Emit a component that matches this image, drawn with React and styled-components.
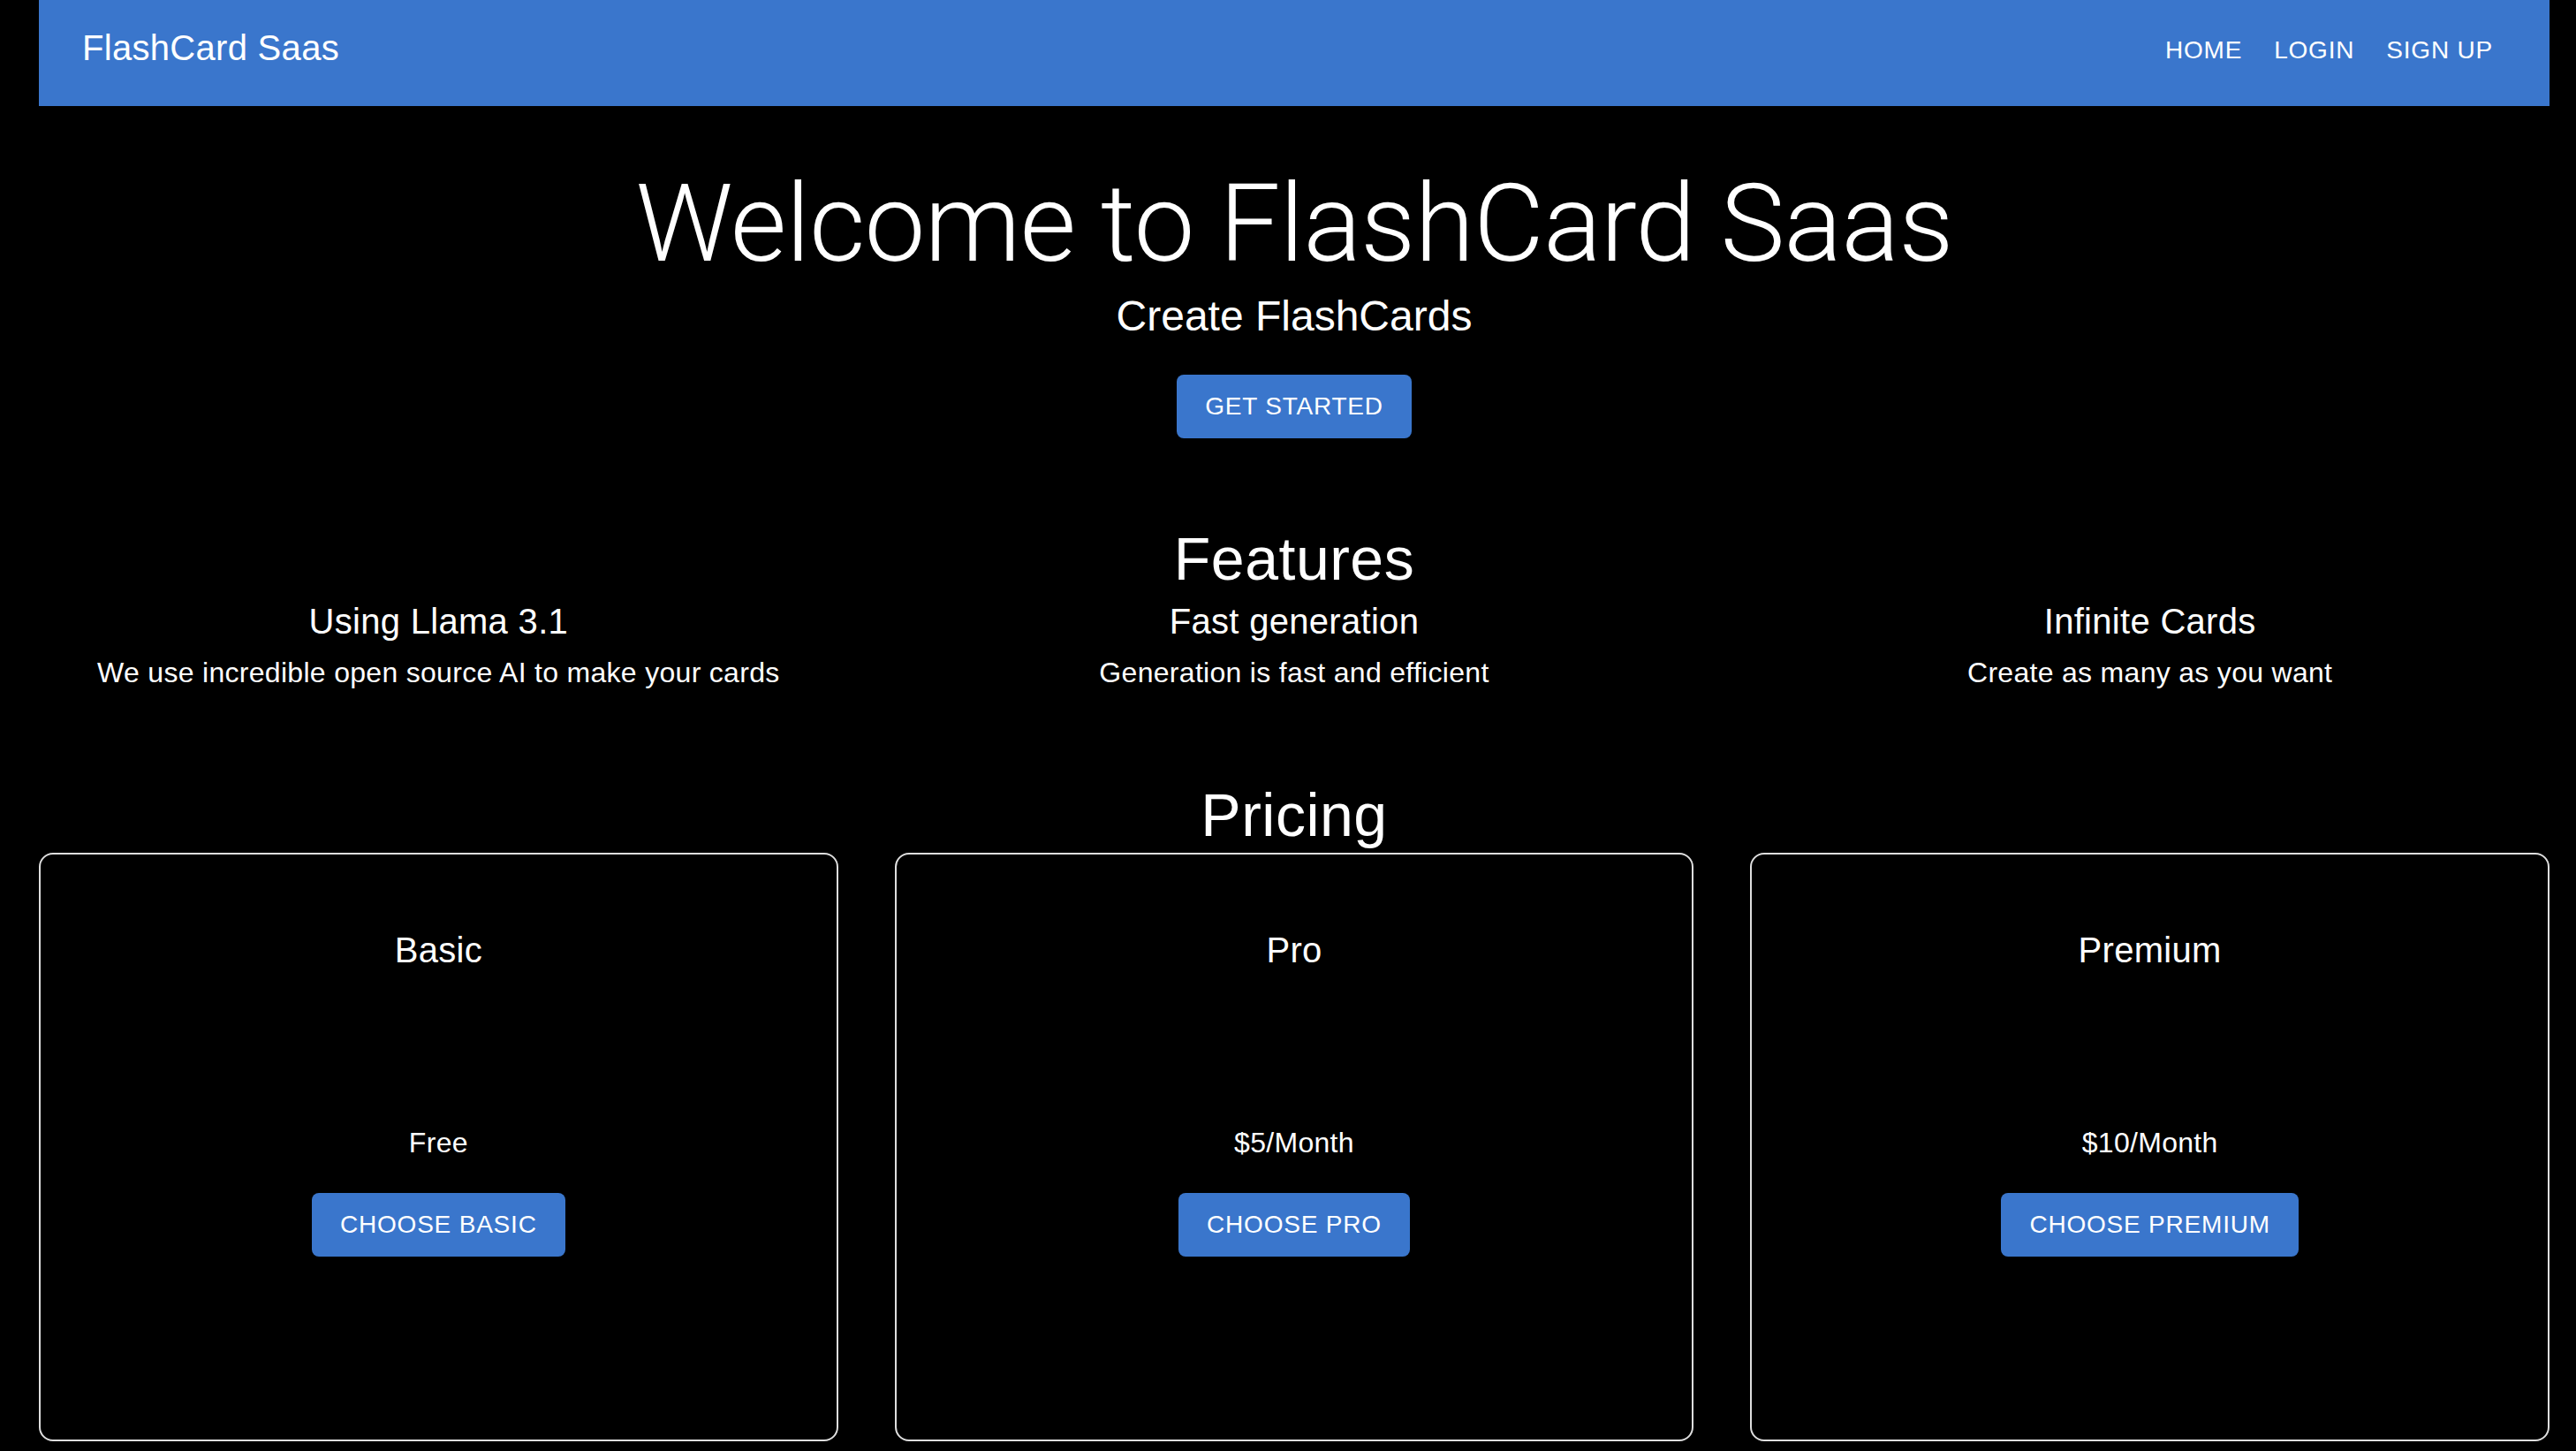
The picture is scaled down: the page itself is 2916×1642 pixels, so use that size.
import React from 'react';
import styled, { createGlobalStyle } from 'styled-components';

const BLUE = '#3a76cc';
const SANS = '"Liberation Sans", Arial, Helvetica, sans-serif';

const GlobalStyle = createGlobalStyle`
    html, body {
        margin: 0;
        padding: 0;
        background: #000;
    }
    body {
        font-family: ${SANS};
        color: #fff;
    }
    * {
        box-sizing: border-box;
    }
`;

const Page = styled.div`
    min-height: 100vh;
    background: #000;
    padding: 0 30px 0 44px;
`;

const NavBar = styled.header`
    display: flex;
    align-items: center;
    justify-content: space-between;
    height: 120px;
    padding: 0 46px 12px 49px;
    background: ${BLUE};
`;

const Brand = styled.div`
    font-size: 40px;
    line-height: 64px;
    letter-spacing: 0.3px;
`;

const NavLinks = styled.nav`
    display: flex;
    align-items: center;
`;

const NavLink = styled.a`
    display: block;
    padding: 6px 18px 0;
    font-size: 28px;
    line-height: 48px;
    letter-spacing: 0.8px;
    text-transform: uppercase;
    color: #fff;
    text-decoration: none;
    cursor: pointer;
`;

const Hero = styled.section`
    display: flex;
    flex-direction: column;
    align-items: center;
    margin-top: 61px;
`;

const HeroTitle = styled.h1`
    margin: 0;
    font-family: Roboto, ${SANS};
    font-weight: 300;
    font-size: 123px;
    line-height: 145px;
    letter-spacing: -1px;
`;

const HeroSubtitle = styled.h2`
    margin: 0;
    font-weight: 400;
    font-size: 48px;
    line-height: 64px;
`;

const Button = styled.button`
    height: 72px;
    margin-top: ${p => p.$top || 0}px;
    padding: 0 32px;
    border: 0;
    border-radius: 8px;
    background: ${BLUE};
    color: #fff;
    font-family: ${SANS};
    font-size: 28px;
    letter-spacing: 0.8px;
    text-transform: uppercase;
    cursor: pointer;
`;

const Section = styled.section`
    margin-top: ${p => p.$top}px;
`;

const SectionTitle = styled.h3`
    margin: 0;
    font-weight: 400;
    font-size: 68px;
    line-height: 84px;
    letter-spacing: 0.5px;
    text-align: center;
`;

const ThreeCols = styled.div`
    display: grid;
    grid-template-columns: repeat(3, 1fr);
    column-gap: 64px;
`;

const Feature = styled.div`
    text-align: center;
`;

const FeatureTitle = styled.h4`
    margin: 0;
    font-weight: 400;
    font-size: 40px;
    line-height: 58px;
    letter-spacing: 0.3px;
`;

const FeatureText = styled.p`
    margin: 5px 0 0;
    font-size: 32px;
    line-height: 48px;
    letter-spacing: 0.3px;
`;

const PlanCard = styled.div`
    display: flex;
    flex-direction: column;
    align-items: center;
    height: 666px;
    margin-top: 1px;
    padding-top: 76px;
    border: 2px solid #dedede;
    border-radius: 16px;
`;

const PlanName = styled.h4`
    margin: 0;
    font-weight: 400;
    font-size: 40px;
    line-height: 64px;
    letter-spacing: 0.3px;
`;

const PlanPrice = styled.div`
    margin-top: 162px;
    font-size: 32px;
    line-height: 48px;
    letter-spacing: 0.3px;
`;

const features = [
    { title: 'Using Llama 3.1', text: 'We use incredible open source AI to make your cards' },
    { title: 'Fast generation', text: 'Generation is fast and efficient' },
    { title: 'Infinite Cards', text: 'Create as many as you want' },
];

const plans = [
    { name: 'Basic', price: 'Free', action: 'Choose Basic' },
    { name: 'Pro', price: '$5/Month', action: 'Choose Pro' },
    { name: 'Premium', price: '$10/Month', action: 'Choose Premium' },
];

export default function App() {
    return (
        <Page>
            <GlobalStyle />
            <NavBar>
                <Brand>FlashCard Saas</Brand>
                <NavLinks>
                    <NavLink>Home</NavLink>
                    <NavLink>Login</NavLink>
                    <NavLink>Sign Up</NavLink>
                </NavLinks>
            </NavBar>

            <Hero>
                <HeroTitle>Welcome to FlashCard Saas</HeroTitle>
                <HeroSubtitle>Create FlashCards</HeroSubtitle>
                <Button $top={34}>Get Started</Button>
            </Hero>

            <Section $top={94}>
                <SectionTitle>Features</SectionTitle>
                <ThreeCols>
                    {features.map(f => (
                        <Feature key={f.title}>
                            <FeatureTitle>{f.title}</FeatureTitle>
                            <FeatureText>{f.text}</FeatureText>
                        </Feature>
                    ))}
                </ThreeCols>
            </Section>

            <Section $top={95}>
                <SectionTitle>Pricing</SectionTitle>
                <ThreeCols>
                    {plans.map(p => (
                        <PlanCard key={p.name}>
                            <PlanName>{p.name}</PlanName>
                            <PlanPrice>{p.price}</PlanPrice>
                            <Button $top={33}>{p.action}</Button>
                        </PlanCard>
                    ))}
                </ThreeCols>
            </Section>
        </Page>
    );
}
